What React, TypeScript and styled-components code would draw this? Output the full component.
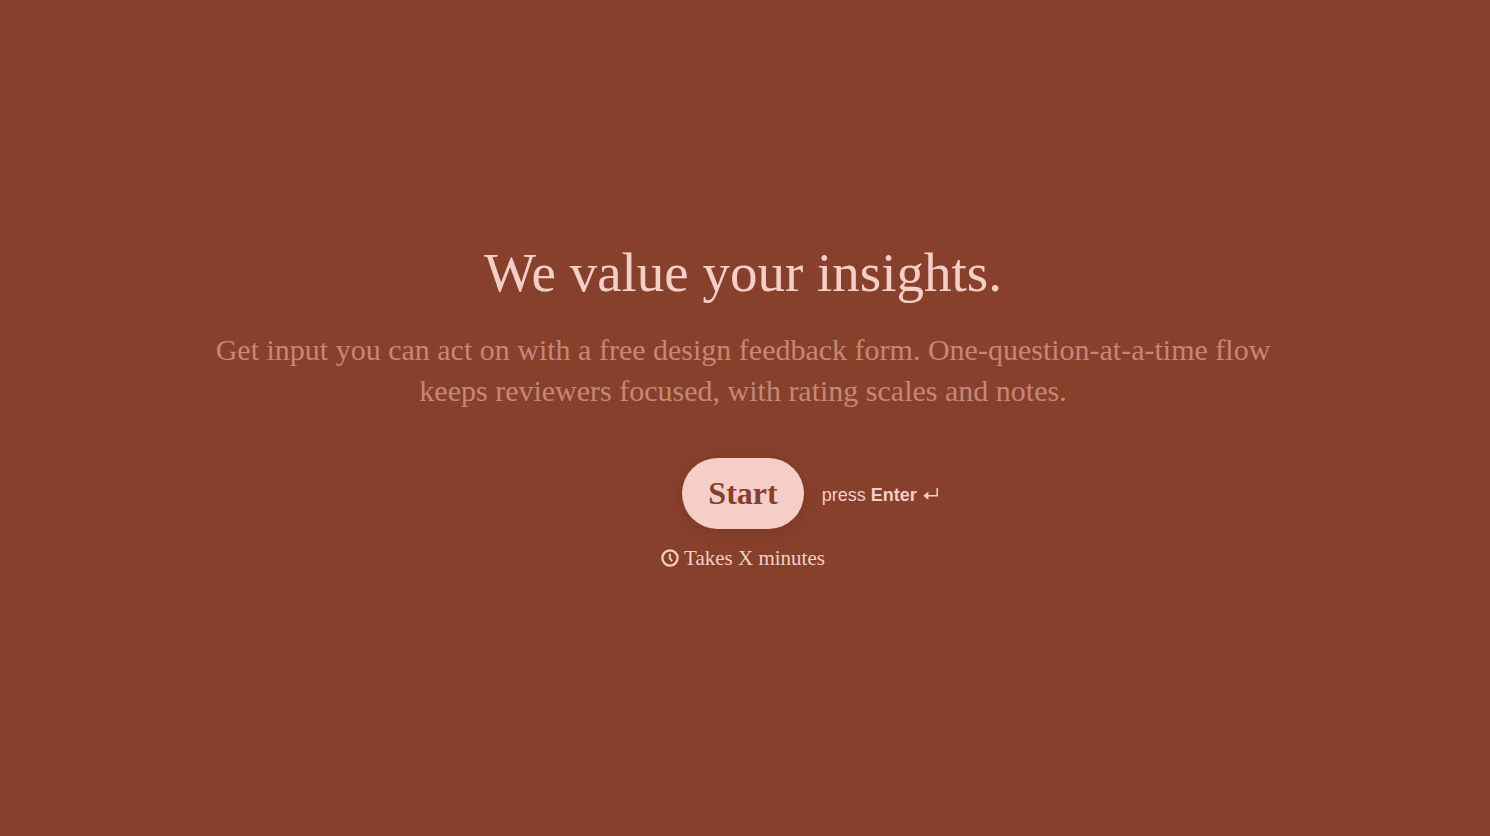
import React from "react";
import styled, { createGlobalStyle } from "styled-components";

const GlobalStyle = createGlobalStyle`
  * { box-sizing: border-box; }
  body {
    margin: 0;
    background: #87402b;
    color: #f5cec7;
    font-family: "Liberation Serif", "Times New Roman", serif;
  }
`;

const Page = styled.main`
  min-height: 100vh;
  display: flex;
  flex-direction: column;
  align-items: center;
  justify-content: center;
  padding: 0 48px 28px 44px;
  text-align: center;
`;

const Title = styled.h1`
  margin: 0;
  font-size: 55px;
  line-height: 72px;
  font-weight: 400;
`;

const Description = styled.p`
  margin: 20px 0 0;
  max-width: 1096px;
  font-size: 30px;
  line-height: 41px;
  color: #c58778;
`;

const Actions = styled.div`
  margin-top: 47px;
  display: grid;
  grid-template-columns: 1fr auto 1fr;
  align-items: center;
  column-gap: 18px;
`;

const StartButton = styled.button`
  grid-column: 2;
  height: 71px;
  padding: 0 26px;
  border: 0;
  border-radius: 36px;
  background: #f5cec7;
  color: #87402b;
  font-family: inherit;
  font-size: 32px;
  font-weight: 700;
  box-shadow: 0 3px 16px rgba(0, 0, 0, 0.1);
  cursor: pointer;
`;

const Hint = styled.div`
  display: flex;
  align-items: center;
  gap: 6px;
  padding-top: 4px;
  font-family: "Liberation Sans", Arial, sans-serif;
  font-size: 18px;
  line-height: 24px;
  white-space: nowrap;
`;

const Duration = styled.div`
  margin-top: 15px;
  display: flex;
  align-items: center;
  gap: 5px;
  font-size: 21px;
  line-height: 28px;
`;

const ClockIcon = () => (
  <svg width="18" height="18" viewBox="0 0 18 18" fill="none" stroke="currentColor" aria-hidden="true">
    <circle cx="9" cy="9" r="7.6" strokeWidth="2.2" />
    <path d="M8.8 4.8V9.2l2.3 3" strokeWidth="2" />
  </svg>
);

const EnterIcon = () => (
  <svg width="16" height="14" viewBox="0 0 16 14" fill="none" aria-hidden="true">
    <path d="M14.2 0v7.8H4" stroke="currentColor" strokeWidth="1.5" />
    <path d="M0.4 7.8L5.4 3.6v8.4z" fill="currentColor" />
  </svg>
);

export default function App() {
  return (
    <>
      <GlobalStyle />
      <Page>
        <Title>We value your insights.</Title>
        <Description>
          Get input you can act on with a free design feedback form. One-question-at-a-time flow
          keeps reviewers focused, with rating scales and notes.
        </Description>
        <Actions>
          <StartButton type="button">Start</StartButton>
          <Hint>
            <span>press <strong>Enter</strong></span>
            <EnterIcon />
          </Hint>
        </Actions>
        <Duration>
          <ClockIcon />
          Takes X minutes
        </Duration>
      </Page>
    </>
  );
}
